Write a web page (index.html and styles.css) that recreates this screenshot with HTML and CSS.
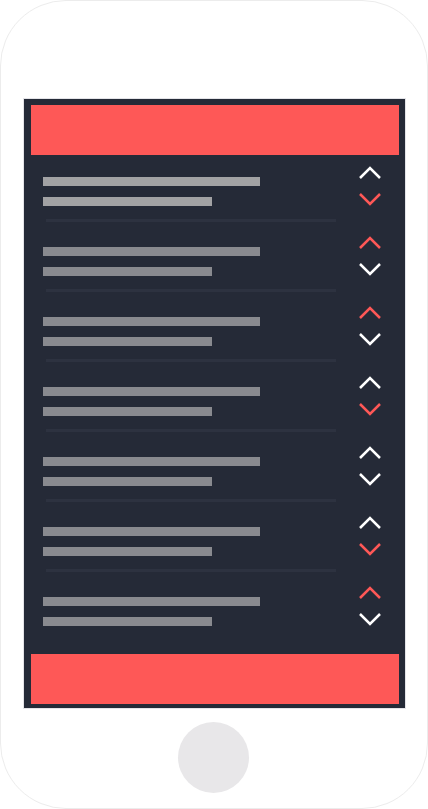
FILE: index.html
```html
<!DOCTYPE html>
<html>
<head>
<meta charset="utf-8">
<link rel="stylesheet" href="styles.css">
</head>
<body>
<div class="phone">
  <div class="screen">
    <div class="bar-red"></div>
    <div class="list">
      <div class="row first">
        <div class="row-main">
          <div class="lines"><div class="line long"></div><div class="line short"></div></div>
          <div class="arrows">
            <svg class="chev white" width="22" height="12" viewBox="0 0 22 12"><polyline points="1,11 11,1 21,11"/></svg>
            <svg class="chev red" width="22" height="12" viewBox="0 0 22 12"><polyline points="1,1 11,11 21,1"/></svg>
          </div>
        </div>
        <div class="divider"></div>
      </div>
      <div class="row">
        <div class="row-main">
          <div class="lines"><div class="line long"></div><div class="line short"></div></div>
          <div class="arrows">
            <svg class="chev red" width="22" height="12" viewBox="0 0 22 12"><polyline points="1,11 11,1 21,11"/></svg>
            <svg class="chev white" width="22" height="12" viewBox="0 0 22 12"><polyline points="1,1 11,11 21,1"/></svg>
          </div>
        </div>
        <div class="divider"></div>
      </div>
      <div class="row">
        <div class="row-main">
          <div class="lines"><div class="line long"></div><div class="line short"></div></div>
          <div class="arrows">
            <svg class="chev red" width="22" height="12" viewBox="0 0 22 12"><polyline points="1,11 11,1 21,11"/></svg>
            <svg class="chev white" width="22" height="12" viewBox="0 0 22 12"><polyline points="1,1 11,11 21,1"/></svg>
          </div>
        </div>
        <div class="divider"></div>
      </div>
      <div class="row">
        <div class="row-main">
          <div class="lines"><div class="line long"></div><div class="line short"></div></div>
          <div class="arrows">
            <svg class="chev white" width="22" height="12" viewBox="0 0 22 12"><polyline points="1,11 11,1 21,11"/></svg>
            <svg class="chev red" width="22" height="12" viewBox="0 0 22 12"><polyline points="1,1 11,11 21,1"/></svg>
          </div>
        </div>
        <div class="divider"></div>
      </div>
      <div class="row">
        <div class="row-main">
          <div class="lines"><div class="line long"></div><div class="line short"></div></div>
          <div class="arrows">
            <svg class="chev white" width="22" height="12" viewBox="0 0 22 12"><polyline points="1,11 11,1 21,11"/></svg>
            <svg class="chev white" width="22" height="12" viewBox="0 0 22 12"><polyline points="1,1 11,11 21,1"/></svg>
          </div>
        </div>
        <div class="divider"></div>
      </div>
      <div class="row">
        <div class="row-main">
          <div class="lines"><div class="line long"></div><div class="line short"></div></div>
          <div class="arrows">
            <svg class="chev white" width="22" height="12" viewBox="0 0 22 12"><polyline points="1,11 11,1 21,11"/></svg>
            <svg class="chev red" width="22" height="12" viewBox="0 0 22 12"><polyline points="1,1 11,11 21,1"/></svg>
          </div>
        </div>
        <div class="divider"></div>
      </div>
      <div class="row">
        <div class="row-main">
          <div class="lines"><div class="line long"></div><div class="line short"></div></div>
          <div class="arrows">
            <svg class="chev red" width="22" height="12" viewBox="0 0 22 12"><polyline points="1,11 11,1 21,11"/></svg>
            <svg class="chev white" width="22" height="12" viewBox="0 0 22 12"><polyline points="1,1 11,11 21,1"/></svg>
          </div>
        </div>
      </div>
    </div>
    <div class="bar-red footer"></div>
  </div>
  <div class="home"></div>
</div>
</body>
</html>
```
FILE: styles.css
```css
html, body {
  margin: 0;
  padding: 0;
  background: #ffffff;
}
.phone {
  box-sizing: border-box;
  width: 428px;
  height: 809px;
  border: 1px solid #ececec;
  border-radius: 66px;
  padding: 98px 0 0 23px;
  display: flex;
  flex-direction: column;
  align-items: flex-start;
}
.screen {
  box-sizing: border-box;
  width: 381px;
  height: 609px;
  background: #252a37;
  box-shadow: 0 0 0 1px #e4e4e8;
  padding: 6px 6px 4px 7px;
  display: flex;
  flex-direction: column;
}
.bar-red {
  height: 50px;
  background: #fe5857;
  flex: none;
}
.footer {
  margin-top: 9px;
}
.list {
  display: flex;
  flex-direction: column;
}
.row {
  height: 70px;
  display: flex;
  flex-direction: column;
}
.row-main {
  display: flex;
  align-items: flex-start;
  padding-left: 12px;
  height: 51px;
}
.lines {
  margin-top: 22px;
  width: 217px;
  display: flex;
  flex-direction: column;
  gap: 11px;
}
.line {
  height: 9px;
  background: #898a8f;
}
.first .line {
  background: #a2a2a4;
}
.line.long { width: 217px; }
.line.short { width: 169px; }
.arrows {
  margin-left: 99px;
  margin-top: 12px;
  display: flex;
  flex-direction: column;
  gap: 14px;
}
.chev {
  display: block;
  overflow: visible;
}
.chev polyline {
  fill: none;
  stroke-width: 2.5;
  stroke-linecap: butt;
  stroke-linejoin: miter;
}
.chev.white polyline { stroke: #ffffff; }
.chev.red polyline { stroke: #fe5857; }
.divider {
  margin-top: 13px;
  margin-left: 15px;
  width: 290px;
  height: 3px;
  background: #2d3240;
}
.home {
  margin-top: 14px;
  align-self: center;
  margin-left: -25px;
  width: 71px;
  height: 71px;
  border-radius: 50%;
  background: #e8e7e9;
}
```
